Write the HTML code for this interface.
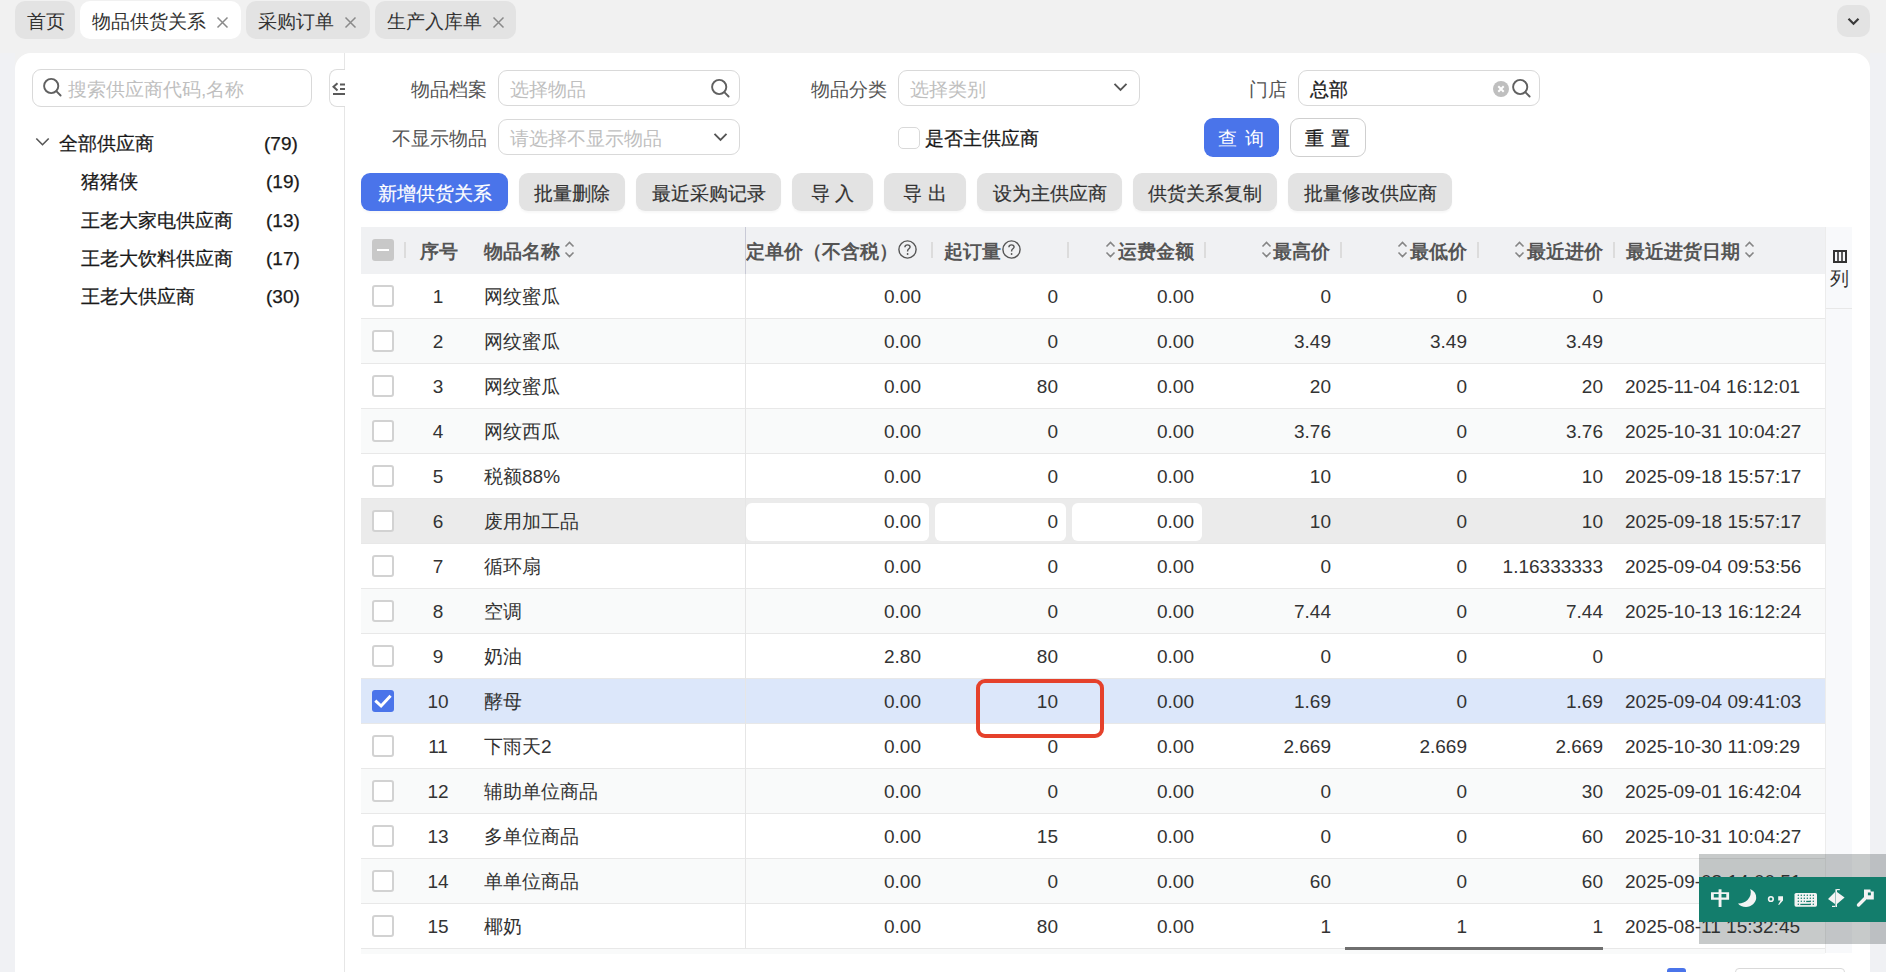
<!DOCTYPE html>
<html><head><meta charset="utf-8">
<style>
*{box-sizing:border-box;margin:0;padding:0}
html,body{width:1886px;height:972px;overflow:hidden}
body{background:#f1f1f1;font-family:"Liberation Sans",sans-serif;font-size:19px;color:#333;position:relative}
.a{position:absolute}
.tab{position:absolute;top:1px;height:38px;border-radius:10px;background:#e3e3e3;line-height:42px;padding-left:12px;color:#333;white-space:nowrap}
.tab.act{background:#fff}
.tab .x{position:absolute;top:15px}
.panel{position:absolute;left:15px;top:53px;width:1855px;height:940px;background:#fff;border-radius:16px 16px 0 0}
.inp{position:absolute;height:36px;border:1px solid #d9d9d9;border-radius:9px;background:#fff}
.ph{position:absolute;left:11px;top:1px;line-height:35px;color:#bfbfbf;white-space:nowrap}
.lbl{position:absolute;line-height:36px;padding-top:2px;color:#555;text-align:right;white-space:nowrap}
.btn{position:absolute;top:173px;-webkit-text-stroke:0.2px #333;box-shadow:0 2px 2px rgba(0,0,0,0.03);height:38px;border-radius:9px;background:#e3e3e3;color:#333;line-height:38px;padding-top:2px;text-align:center;white-space:nowrap}
.btn.blue{background:#4a74ea;color:#fff;-webkit-text-stroke:0.2px #fff}
.hd{position:absolute;top:227px;left:361px;width:1464px;height:47px;background:#f0f1f3}
.row{position:absolute;left:361px;width:1464px;height:45px;border-bottom:1px solid #e8e8e8;background:#fff}
.row.st{background:#f9fafa}
.c{position:absolute;top:1px;height:44px;line-height:44px;white-space:nowrap;color:#333}
.r{text-align:right}
.hc{position:absolute;top:1px;height:47px;line-height:47px;font-weight:bold;color:#555;white-space:nowrap}
.sep{position:absolute;top:15px;width:2px;height:16px;background:#dcdcdc}
.cb{position:absolute;left:11px;top:11px;width:22px;height:22px;border:2px solid #d2d2d2;border-radius:3px;background:#fff}
.srt{position:absolute;top:13px;width:11px;height:19px}
.srt svg,.q svg{display:block}
.q{position:absolute;top:13px;width:19px;height:19px}
.cb.on{border:none;background:#4a74ea}
.row.hov{background:#ebebeb}
.row.sel{background:#dce7fa}
.ebox{position:absolute;top:4px;height:38px;border-radius:6px;background:#fff}
.dk{-webkit-text-stroke:0.25px #1a1a1a}
</style></head>
<body>
<!-- tabs -->
<div class="tab" style="left:15px;width:60px">首页</div>
<div class="tab act" style="left:80px;width:161px">物品供货关系<svg class="x" style="left:136px" width="13" height="13" viewBox="0 0 13 13"><path d="M1.5 1.5L11.5 11.5M11.5 1.5L1.5 11.5" stroke="#8a8a8a" stroke-width="1.5"/></svg></div>
<div class="tab" style="left:246px;width:124px">采购订单<svg class="x" style="left:98px" width="13" height="13" viewBox="0 0 13 13"><path d="M1.5 1.5L11.5 11.5M11.5 1.5L1.5 11.5" stroke="#8a8a8a" stroke-width="1.5"/></svg></div>
<div class="tab" style="left:375px;width:141px">生产入库单<svg class="x" style="left:117px" width="13" height="13" viewBox="0 0 13 13"><path d="M1.5 1.5L11.5 11.5M11.5 1.5L1.5 11.5" stroke="#8a8a8a" stroke-width="1.5"/></svg></div>
<div class="a" style="left:1837px;top:5px;width:33px;height:32px;border-radius:10px;background:#e3e3e3"><svg class="a" style="left:10px;top:12px" width="13" height="9" viewBox="0 0 13 9"><path d="M1.5 1.8L6.5 6.8L11.5 1.8" fill="none" stroke="#3a3a3a" stroke-width="2.2"/></svg></div>

<div class="panel"></div>
<div class="a" style="left:0;top:53px;width:15px;height:919px;background:#f0f1f4"></div>
<div class="a" style="left:1870px;top:53px;width:16px;height:919px;background:#f0f1f4"></div>

<!-- left sidebar -->
<div class="a" style="left:344px;top:53px;width:1px;height:919px;background:#e6e6e6"></div>
<div class="inp" style="left:32px;top:69px;width:280px;height:38px"><span class="ph" style="left:35px;line-height:37px">搜索供应商代码,名称</span></div>
<div class="a" style="left:329px;top:69px;width:16px;height:38px;border:1px solid #ddd;border-right:none;border-radius:8px 0 0 8px;background:#fff"></div>

<div class="a" style="left:59px;top:127px;line-height:32px;color:#1a1a1a;padding-top:1px;-webkit-text-stroke:0.25px #1a1a1a">全部供应商</div>
<div class="a" style="left:264px;top:127px;line-height:32px;color:#1a1a1a;padding-top:1px;-webkit-text-stroke:0.25px #1a1a1a">(79)</div>
<div class="a" style="left:81px;top:165px;line-height:32px;color:#1a1a1a;padding-top:1px;-webkit-text-stroke:0.25px #1a1a1a">猪猪侠</div>
<div class="a" style="left:266px;top:165px;line-height:32px;color:#1a1a1a;padding-top:1px;-webkit-text-stroke:0.25px #1a1a1a">(19)</div>
<div class="a" style="left:81px;top:204px;line-height:32px;color:#1a1a1a;padding-top:1px;-webkit-text-stroke:0.25px #1a1a1a">王老大家电供应商</div>
<div class="a" style="left:266px;top:204px;line-height:32px;color:#1a1a1a;padding-top:1px;-webkit-text-stroke:0.25px #1a1a1a">(13)</div>
<div class="a" style="left:81px;top:242px;line-height:32px;color:#1a1a1a;padding-top:1px;-webkit-text-stroke:0.25px #1a1a1a">王老大饮料供应商</div>
<div class="a" style="left:266px;top:242px;line-height:32px;color:#1a1a1a;padding-top:1px;-webkit-text-stroke:0.25px #1a1a1a">(17)</div>
<div class="a" style="left:81px;top:280px;line-height:32px;color:#1a1a1a;padding-top:1px;-webkit-text-stroke:0.25px #1a1a1a">王老大供应商</div>
<div class="a" style="left:266px;top:280px;line-height:32px;color:#1a1a1a;padding-top:1px;-webkit-text-stroke:0.25px #1a1a1a">(30)</div>

<!-- filters -->
<div class="lbl" style="left:390px;top:70px;width:97px">物品档案</div>
<div class="inp" style="left:498px;top:70px;width:242px"><span class="ph">选择物品</span></div>
<div class="lbl" style="left:790px;top:70px;width:97px">物品分类</div>
<div class="inp" style="left:898px;top:70px;width:242px"><span class="ph">选择类别</span></div>
<div class="lbl" style="left:1190px;top:70px;width:97px">门店</div>
<div class="inp" style="left:1298px;top:70px;width:242px"><span class="ph dk" style="color:#1a1a1a">总部</span></div>
<div class="lbl" style="left:380px;top:119px;width:107px">不显示物品</div>
<div class="inp" style="left:498px;top:119px;width:242px"><span class="ph">请选择不显示物品</span></div>
<div class="a" style="left:898px;top:127px;width:22px;height:22px;border:1px solid #d9d9d9;border-radius:5px"></div>
<div class="a dk" style="left:925px;top:120px;line-height:38px;color:#1a1a1a">是否主供应商</div>
<div class="a" style="left:1204px;top:118px;width:75px;height:39px;border-radius:9px;background:#4a74ea;color:#fff;line-height:39px;padding-top:1px;text-align:center;letter-spacing:1px">查 询</div>
<div class="a" style="left:1290px;top:118px;width:76px;height:39px;border-radius:9px;border:1px solid #cfcfcf;background:#fff;color:#1a1a1a;line-height:37px;padding-top:1px;text-align:center;letter-spacing:1px;-webkit-text-stroke:0.3px #1a1a1a">重 置</div>

<!-- action buttons -->
<div class="btn blue" style="left:361px;width:147px">新增供货关系</div>
<div class="btn" style="left:519px;width:106px">批量删除</div>
<div class="btn" style="left:636px;width:145px">最近采购记录</div>
<div class="btn" style="left:792px;width:81px">导 入</div>
<div class="btn" style="left:884px;width:82px">导 出</div>
<div class="btn" style="left:977px;width:145px">设为主供应商</div>
<div class="btn" style="left:1133px;width:144px">供货关系复制</div>
<div class="btn" style="left:1288px;width:164px">批量修改供应商</div>

<div class="hd">
<div class="a" style="left:11px;top:12px;width:22px;height:22px;border-radius:3px;background:#c8c8c8"><div class="a" style="left:5px;top:10px;width:12px;height:2px;background:#fff"></div></div>
<div class="sep" style="left:43px"></div>
<div class="hc" style="left:59px">序号</div>
<div class="hc" style="left:123px">物品名称</div>
<div class="srt" style="left:203px"><svg width="11" height="19" viewBox="0 0 11 19"><path d="M1.5 6.5L5.5 2.5L9.5 6.5M1.5 12.5L5.5 16.5L9.5 12.5" fill="none" stroke="#858585" stroke-width="1.6"/></svg></div>
<div class="a" style="left:384px;top:0;width:150px;height:47px;overflow:hidden"><div class="hc r" style="left:-247px;width:400px">锁定单价（不含税）</div></div>
<div class="q" style="left:537px"><svg width="19" height="19" viewBox="0 0 19 19"><circle cx="9.5" cy="9.5" r="8.6" fill="none" stroke="#555" stroke-width="1.4"/><path d="M6.9 7.3C6.9 5.8 8 4.9 9.5 4.9C11 4.9 12.1 5.8 12.1 7.1C12.1 8.7 9.6 9 9.6 10.9V11.6" fill="none" stroke="#555" stroke-width="1.4"/><circle cx="9.6" cy="14" r="0.9" fill="#555"/></svg></div>
<div class="sep" style="left:570px"></div>
<div class="sep" style="left:706px"></div>
<div class="sep" style="left:843px"></div>
<div class="sep" style="left:979px"></div>
<div class="sep" style="left:1116px"></div>
<div class="sep" style="left:1252px"></div>
<div class="hc" style="left:583px">起订量</div>
<div class="q" style="left:641px"><svg width="19" height="19" viewBox="0 0 19 19"><circle cx="9.5" cy="9.5" r="8.6" fill="none" stroke="#555" stroke-width="1.4"/><path d="M6.9 7.3C6.9 5.8 8 4.9 9.5 4.9C11 4.9 12.1 5.8 12.1 7.1C12.1 8.7 9.6 9 9.6 10.9V11.6" fill="none" stroke="#555" stroke-width="1.4"/><circle cx="9.6" cy="14" r="0.9" fill="#555"/></svg></div>
<div class="hc r" style="left:633px;width:200px">运费金额</div>
<div class="srt" style="left:744px"><svg width="11" height="19" viewBox="0 0 11 19"><path d="M1.5 6.5L5.5 2.5L9.5 6.5M1.5 12.5L5.5 16.5L9.5 12.5" fill="none" stroke="#858585" stroke-width="1.6"/></svg></div>
<div class="hc r" style="left:769px;width:200px">最高价</div>
<div class="srt" style="left:900px"><svg width="11" height="19" viewBox="0 0 11 19"><path d="M1.5 6.5L5.5 2.5L9.5 6.5M1.5 12.5L5.5 16.5L9.5 12.5" fill="none" stroke="#858585" stroke-width="1.6"/></svg></div>
<div class="hc r" style="left:906px;width:200px">最低价</div>
<div class="srt" style="left:1036px"><svg width="11" height="19" viewBox="0 0 11 19"><path d="M1.5 6.5L5.5 2.5L9.5 6.5M1.5 12.5L5.5 16.5L9.5 12.5" fill="none" stroke="#858585" stroke-width="1.6"/></svg></div>
<div class="hc r" style="left:1042px;width:200px">最近进价</div>
<div class="srt" style="left:1153px"><svg width="11" height="19" viewBox="0 0 11 19"><path d="M1.5 6.5L5.5 2.5L9.5 6.5M1.5 12.5L5.5 16.5L9.5 12.5" fill="none" stroke="#858585" stroke-width="1.6"/></svg></div>
<div class="hc" style="left:1265px">最近进货日期</div>
<div class="srt" style="left:1383px"><svg width="11" height="19" viewBox="0 0 11 19"><path d="M1.5 6.5L5.5 2.5L9.5 6.5M1.5 12.5L5.5 16.5L9.5 12.5" fill="none" stroke="#858585" stroke-width="1.6"/></svg></div>
</div>
<div class="row" style="top:274px">
<div class="cb"></div>
<div class="c" style="left:44px;width:66px;text-align:center">1</div>
<div class="c" style="left:123px">网纹蜜瓜</div>
<div class="c r" style="left:360px;width:200px">0.00</div>
<div class="c r" style="left:497px;width:200px">0</div>
<div class="c r" style="left:633px;width:200px">0.00</div>
<div class="c r" style="left:770px;width:200px">0</div>
<div class="c r" style="left:906px;width:200px">0</div>
<div class="c r" style="left:1042px;width:200px">0</div>
</div>
<div class="row st" style="top:319px">
<div class="cb"></div>
<div class="c" style="left:44px;width:66px;text-align:center">2</div>
<div class="c" style="left:123px">网纹蜜瓜</div>
<div class="c r" style="left:360px;width:200px">0.00</div>
<div class="c r" style="left:497px;width:200px">0</div>
<div class="c r" style="left:633px;width:200px">0.00</div>
<div class="c r" style="left:770px;width:200px">3.49</div>
<div class="c r" style="left:906px;width:200px">3.49</div>
<div class="c r" style="left:1042px;width:200px">3.49</div>
</div>
<div class="row" style="top:364px">
<div class="cb"></div>
<div class="c" style="left:44px;width:66px;text-align:center">3</div>
<div class="c" style="left:123px">网纹蜜瓜</div>
<div class="c r" style="left:360px;width:200px">0.00</div>
<div class="c r" style="left:497px;width:200px">80</div>
<div class="c r" style="left:633px;width:200px">0.00</div>
<div class="c r" style="left:770px;width:200px">20</div>
<div class="c r" style="left:906px;width:200px">0</div>
<div class="c r" style="left:1042px;width:200px">20</div>
<div class="c" style="left:1264px">2025-11-04 16:12:01</div>
</div>
<div class="row st" style="top:409px">
<div class="cb"></div>
<div class="c" style="left:44px;width:66px;text-align:center">4</div>
<div class="c" style="left:123px">网纹西瓜</div>
<div class="c r" style="left:360px;width:200px">0.00</div>
<div class="c r" style="left:497px;width:200px">0</div>
<div class="c r" style="left:633px;width:200px">0.00</div>
<div class="c r" style="left:770px;width:200px">3.76</div>
<div class="c r" style="left:906px;width:200px">0</div>
<div class="c r" style="left:1042px;width:200px">3.76</div>
<div class="c" style="left:1264px">2025-10-31 10:04:27</div>
</div>
<div class="row" style="top:454px">
<div class="cb"></div>
<div class="c" style="left:44px;width:66px;text-align:center">5</div>
<div class="c" style="left:123px">税额88%</div>
<div class="c r" style="left:360px;width:200px">0.00</div>
<div class="c r" style="left:497px;width:200px">0</div>
<div class="c r" style="left:633px;width:200px">0.00</div>
<div class="c r" style="left:770px;width:200px">10</div>
<div class="c r" style="left:906px;width:200px">0</div>
<div class="c r" style="left:1042px;width:200px">10</div>
<div class="c" style="left:1264px">2025-09-18 15:57:17</div>
</div>
<div class="row st hov" style="top:499px">
<div class="cb"></div>
<div class="ebox" style="left:385px;width:183px"></div>
<div class="ebox" style="left:574px;width:131px"></div>
<div class="ebox" style="left:711px;width:130px"></div>
<div class="c" style="left:44px;width:66px;text-align:center">6</div>
<div class="c" style="left:123px">废用加工品</div>
<div class="c r" style="left:360px;width:200px">0.00</div>
<div class="c r" style="left:497px;width:200px">0</div>
<div class="c r" style="left:633px;width:200px">0.00</div>
<div class="c r" style="left:770px;width:200px">10</div>
<div class="c r" style="left:906px;width:200px">0</div>
<div class="c r" style="left:1042px;width:200px">10</div>
<div class="c" style="left:1264px">2025-09-18 15:57:17</div>
</div>
<div class="row" style="top:544px">
<div class="cb"></div>
<div class="c" style="left:44px;width:66px;text-align:center">7</div>
<div class="c" style="left:123px">循环扇</div>
<div class="c r" style="left:360px;width:200px">0.00</div>
<div class="c r" style="left:497px;width:200px">0</div>
<div class="c r" style="left:633px;width:200px">0.00</div>
<div class="c r" style="left:770px;width:200px">0</div>
<div class="c r" style="left:906px;width:200px">0</div>
<div class="c r" style="left:1042px;width:200px">1.16333333</div>
<div class="c" style="left:1264px">2025-09-04 09:53:56</div>
</div>
<div class="row st" style="top:589px">
<div class="cb"></div>
<div class="c" style="left:44px;width:66px;text-align:center">8</div>
<div class="c" style="left:123px">空调</div>
<div class="c r" style="left:360px;width:200px">0.00</div>
<div class="c r" style="left:497px;width:200px">0</div>
<div class="c r" style="left:633px;width:200px">0.00</div>
<div class="c r" style="left:770px;width:200px">7.44</div>
<div class="c r" style="left:906px;width:200px">0</div>
<div class="c r" style="left:1042px;width:200px">7.44</div>
<div class="c" style="left:1264px">2025-10-13 16:12:24</div>
</div>
<div class="row" style="top:634px">
<div class="cb"></div>
<div class="c" style="left:44px;width:66px;text-align:center">9</div>
<div class="c" style="left:123px">奶油</div>
<div class="c r" style="left:360px;width:200px">2.80</div>
<div class="c r" style="left:497px;width:200px">80</div>
<div class="c r" style="left:633px;width:200px">0.00</div>
<div class="c r" style="left:770px;width:200px">0</div>
<div class="c r" style="left:906px;width:200px">0</div>
<div class="c r" style="left:1042px;width:200px">0</div>
</div>
<div class="row st sel" style="top:679px">
<div class="cb on"><svg width="22" height="22" viewBox="0 0 22 22"><path d="M3.3 10.6L9.1 16L18.6 5.8" fill="none" stroke="#fff" stroke-width="3"/></svg></div>
<div class="c" style="left:44px;width:66px;text-align:center">10</div>
<div class="c" style="left:123px">酵母</div>
<div class="c r" style="left:360px;width:200px">0.00</div>
<div class="c r" style="left:497px;width:200px">10</div>
<div class="c r" style="left:633px;width:200px">0.00</div>
<div class="c r" style="left:770px;width:200px">1.69</div>
<div class="c r" style="left:906px;width:200px">0</div>
<div class="c r" style="left:1042px;width:200px">1.69</div>
<div class="c" style="left:1264px">2025-09-04 09:41:03</div>
</div>
<div class="row" style="top:724px">
<div class="cb"></div>
<div class="c" style="left:44px;width:66px;text-align:center">11</div>
<div class="c" style="left:123px">下雨天2</div>
<div class="c r" style="left:360px;width:200px">0.00</div>
<div class="c r" style="left:497px;width:200px">0</div>
<div class="c r" style="left:633px;width:200px">0.00</div>
<div class="c r" style="left:770px;width:200px">2.669</div>
<div class="c r" style="left:906px;width:200px">2.669</div>
<div class="c r" style="left:1042px;width:200px">2.669</div>
<div class="c" style="left:1264px">2025-10-30 11:09:29</div>
</div>
<div class="row st" style="top:769px">
<div class="cb"></div>
<div class="c" style="left:44px;width:66px;text-align:center">12</div>
<div class="c" style="left:123px">辅助单位商品</div>
<div class="c r" style="left:360px;width:200px">0.00</div>
<div class="c r" style="left:497px;width:200px">0</div>
<div class="c r" style="left:633px;width:200px">0.00</div>
<div class="c r" style="left:770px;width:200px">0</div>
<div class="c r" style="left:906px;width:200px">0</div>
<div class="c r" style="left:1042px;width:200px">30</div>
<div class="c" style="left:1264px">2025-09-01 16:42:04</div>
</div>
<div class="row" style="top:814px">
<div class="cb"></div>
<div class="c" style="left:44px;width:66px;text-align:center">13</div>
<div class="c" style="left:123px">多单位商品</div>
<div class="c r" style="left:360px;width:200px">0.00</div>
<div class="c r" style="left:497px;width:200px">15</div>
<div class="c r" style="left:633px;width:200px">0.00</div>
<div class="c r" style="left:770px;width:200px">0</div>
<div class="c r" style="left:906px;width:200px">0</div>
<div class="c r" style="left:1042px;width:200px">60</div>
<div class="c" style="left:1264px">2025-10-31 10:04:27</div>
</div>
<div class="row st" style="top:859px">
<div class="cb"></div>
<div class="c" style="left:44px;width:66px;text-align:center">14</div>
<div class="c" style="left:123px">单单位商品</div>
<div class="c r" style="left:360px;width:200px">0.00</div>
<div class="c r" style="left:497px;width:200px">0</div>
<div class="c r" style="left:633px;width:200px">0.00</div>
<div class="c r" style="left:770px;width:200px">60</div>
<div class="c r" style="left:906px;width:200px">0</div>
<div class="c r" style="left:1042px;width:200px">60</div>
<div class="c" style="left:1264px">2025-09-08 14:00:51</div>
</div>
<div class="row" style="top:904px">
<div class="cb"></div>
<div class="c" style="left:44px;width:66px;text-align:center">15</div>
<div class="c" style="left:123px">椰奶</div>
<div class="c r" style="left:360px;width:200px">0.00</div>
<div class="c r" style="left:497px;width:200px">80</div>
<div class="c r" style="left:633px;width:200px">0.00</div>
<div class="c r" style="left:770px;width:200px">1</div>
<div class="c r" style="left:906px;width:200px">1</div>
<div class="c r" style="left:1042px;width:200px">1</div>
<div class="c" style="left:1264px">2025-08-11 15:32:45</div>
</div>
<div class="a" style="left:745px;top:227px;width:1px;height:47px;background:#c9cad6"></div>
<div class="a" style="left:745px;top:274px;width:1px;height:675px;background:#e6e6e6"></div>
<div class="a" style="left:1825px;top:227px;width:27px;height:726px;background:#f8f9fb;border-left:1px solid #ececec"></div>
<div class="a" style="left:1826px;top:308px;width:26px;height:1px;background:#e8e8e8"></div>
<div class="a" style="left:1833px;top:246px;width:14px;height:13px"><svg width="14" height="13" viewBox="0 0 14 13"><rect x="1" y="1" width="12" height="11" fill="none" stroke="#333" stroke-width="2"/><path d="M5 1V12M9 1V12" stroke="#333" stroke-width="1.6"/></svg></div>
<div class="a" style="left:1830px;top:265px;line-height:28px;color:#333">列</div>
<div class="a" style="left:976px;top:679px;width:128px;height:59px;border:4px solid #e5412b;border-radius:9px"></div>
<div class="a" style="left:361px;top:949px;width:1464px;height:5px;background:#f9fafa"></div>
<div class="a" style="left:1345px;top:947px;width:258px;height:3px;background:#6f6f6f"></div>
<div class="a" style="left:1699px;top:854px;width:187px;height:90px;background:rgba(30,45,45,0.25)"></div>
<div class="a" style="left:1699px;top:877px;width:187px;height:45px;background:#137d6c"></div>
<div class="a" style="left:1699px;top:877px;width:187px;height:45px"><svg width="187" height="45" viewBox="1699 877 187 45" style="display:block"><path d="M1711 892.2H1729.1V899.8H1711Z M1713.8 893.9V897.4H1726.3V893.9Z" fill="#f4f4f4" fill-rule="evenodd"/><rect x="1718.6" y="889.3" width="2.9" height="17.7" fill="#f4f4f4"/><path d="M1750.3 889C1754.5 891 1756.4 894 1756.2 898C1756 902.5 1751.5 907 1746 907C1742.5 907 1739.5 905.5 1738 903.4C1741.5 903.6 1745 902.5 1747.5 900C1750.5 897 1751.5 893 1750.3 889Z" fill="#f4f4f4"/><circle cx="1770.9" cy="899" r="2.3" fill="none" stroke="#f4f4f4" stroke-width="1.6"/><path d="M1778.2 896.2H1783V900.5L1779 905L1778.2 904.5L1780.6 900.5H1778.2Z" fill="#f4f4f4"/><rect x="1794.5" y="893" width="22.5" height="13.7" rx="1.6" fill="#f4f4f4"/><circle cx="1798.3" cy="895.3" r="0.75" fill="#137d6c"/><circle cx="1801.3" cy="895.3" r="0.75" fill="#137d6c"/><circle cx="1804.3" cy="895.3" r="0.75" fill="#137d6c"/><circle cx="1807.3" cy="895.3" r="0.75" fill="#137d6c"/><circle cx="1810.3" cy="895.3" r="0.75" fill="#137d6c"/><circle cx="1813.3" cy="895.3" r="0.75" fill="#137d6c"/><circle cx="1798.3" cy="898.3" r="0.75" fill="#137d6c"/><circle cx="1801.3" cy="898.3" r="0.75" fill="#137d6c"/><circle cx="1804.3" cy="898.3" r="0.75" fill="#137d6c"/><circle cx="1807.3" cy="898.3" r="0.75" fill="#137d6c"/><circle cx="1810.3" cy="898.3" r="0.75" fill="#137d6c"/><circle cx="1813.3" cy="898.3" r="0.75" fill="#137d6c"/><circle cx="1798.3" cy="901.3" r="0.75" fill="#137d6c"/><circle cx="1801.3" cy="901.3" r="0.75" fill="#137d6c"/><circle cx="1804.3" cy="901.3" r="0.75" fill="#137d6c"/><circle cx="1810.3" cy="901.3" r="0.75" fill="#137d6c"/><circle cx="1813.3" cy="901.3" r="0.75" fill="#137d6c"/><circle cx="1798.3" cy="904.3" r="0.75" fill="#137d6c"/><circle cx="1810.3" cy="904.3" r="0.75" fill="#137d6c"/><circle cx="1813.3" cy="904.3" r="0.75" fill="#137d6c"/><rect x="1806.2" y="900.8" width="4" height="1.3" fill="#137d6c"/><rect x="1800.3" y="903.8" width="10" height="1.3" fill="#137d6c"/><path d="M1828 899L1835 892V904Z M1837 892L1844.6 897.5L1837 904Z" fill="#f4f4f4"/><rect x="1835.4" y="889.2" width="1.6" height="17.8" fill="#f4f4f4"/><rect x="1836.8" y="889" width="3" height="1.2" fill="#f4f4f4"/><rect x="1832" y="905.8" width="3" height="1.2" fill="#f4f4f4"/><path d="M1858.5 905L1866 897.5" stroke="#f4f4f4" stroke-width="3.4" stroke-linecap="round"/><path d="M1864 889.5H1870.5V891.5H1873.8V899.5H1867V897H1864Z" fill="#f4f4f4"/><rect x="1867.9" y="892.5" width="3" height="2.8" fill="#137d6c"/></svg></div>
<div class="a" style="left:1667px;top:968px;width:19px;height:10px;border-radius:3px;background:#4a74ea"></div>
<div class="a" style="left:1735px;top:968px;width:110px;height:10px;border-radius:4px;border:1px solid #d9d9d9;background:#fff"></div>
<!-- icons -->
<svg class="a" style="left:41px;top:76px" width="22" height="22" viewBox="0 0 22 22"><circle cx="10.2" cy="10" r="7.1" fill="none" stroke="#606060" stroke-width="1.9"/><path d="M15.3 15.2L19.6 19.5" stroke="#606060" stroke-width="1.9" stroke-linecap="round"/></svg>
<svg class="a" style="left:709px;top:77px" width="22" height="22" viewBox="0 0 22 22"><circle cx="10.2" cy="10" r="7.1" fill="none" stroke="#606060" stroke-width="1.9"/><path d="M15.3 15.2L19.6 19.5" stroke="#606060" stroke-width="1.9" stroke-linecap="round"/></svg>
<svg class="a" style="left:1510px;top:77px" width="22" height="22" viewBox="0 0 22 22"><circle cx="10.2" cy="10" r="7.1" fill="none" stroke="#606060" stroke-width="1.9"/><path d="M15.3 15.2L19.6 19.5" stroke="#606060" stroke-width="1.9" stroke-linecap="round"/></svg>
<svg class="a" style="left:1493px;top:81px" width="16" height="16" viewBox="0 0 16 16"><circle cx="8" cy="8" r="8" fill="#bfbfbf"/><path d="M5.3 5.3L10.7 10.7M10.7 5.3L5.3 10.7" stroke="#fff" stroke-width="2"/></svg>
<svg class="a" style="left:713px;top:132px" width="16" height="11" viewBox="0 0 16 11"><path d="M1.5 1.8L7.5 7.8L13.5 1.8" fill="none" stroke="#555" stroke-width="1.9"/></svg>
<svg class="a" style="left:1113px;top:82px" width="16" height="11" viewBox="0 0 16 11"><path d="M1.5 1.8L7.5 7.8L13.5 1.8" fill="none" stroke="#555" stroke-width="1.9"/></svg>
<svg class="a" style="left:35px;top:137px" width="16" height="11" viewBox="0 0 16 11"><path d="M1.3 1.5L7.5 7.7L13.7 1.5" fill="none" stroke="#555" stroke-width="1.6"/></svg>
<svg class="a" style="left:330px;top:80px" width="15" height="17" viewBox="0 0 15 17"><path d="M7.5 3.2L3.5 6.8L7.5 10.4" fill="none" stroke="#5a5a5a" stroke-width="2"/><path d="M10 4.5H15M10 9H15M3 14H15" stroke="#5a5a5a" stroke-width="2"/></svg>

</body></html>
